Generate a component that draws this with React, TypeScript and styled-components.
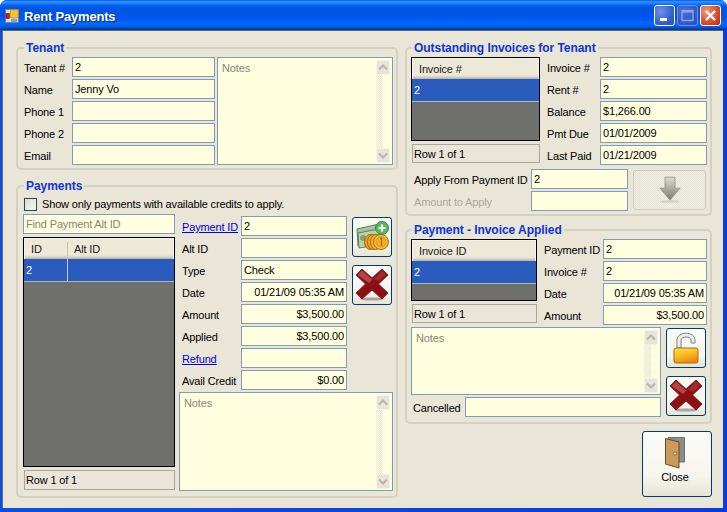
import React from 'react';
import styled, { createGlobalStyle } from 'styled-components';

const Global = createGlobalStyle`
  html, body { margin: 0; padding: 0; background: #fff; }
  * { box-sizing: border-box; }
  body { font-family: "Liberation Sans", Arial, sans-serif; font-size: 11px; letter-spacing: -0.15px; color: #000; }
`;

const Win = styled.div`
  width: 727px; height: 512px; display: flex; flex-direction: column;
  border-radius: 7px 7px 0 0; overflow: hidden;
  background: #0a3be0;
`;
const TitleBar = styled.div`
  height: 30px; flex: none; display: flex; align-items: center; padding: 1px 6px 0 5px;
  background: linear-gradient(to bottom, #0058e6 0, #3a93ff 6%, #127dff 12%, #0262ee 18%, #0057e5 24%, #0054e3 36%, #0055eb 56%, #005bf5 66%, #026afe 76%, #0062ef 86%, #0052d6 92%, #0040ab 96%, #003092 100%);
`;
const TitleText = styled.span`
  margin-left: 5px; padding-top: 2px; color: #fff; font-weight: bold; font-size: 13px; letter-spacing: -0.2px;
  text-shadow: 1px 1px 1px #0a2a90; flex: 1;
`;
const WinBtns = styled.div`display: flex; gap: 2px;`;
const WinBtn = styled.div<{ $kind: 'min' | 'max' | 'close' }>`
  width: 21px; height: 21px; border-radius: 3px; border: 1px solid ${p => p.$kind === 'max' ? '#6f8fe8' : '#fff'};
  display: flex; align-items: center; justify-content: center;
  background: ${p => p.$kind === 'close'
    ? 'radial-gradient(circle at 30% 30%, #f09a7c, #d9492a 60%, #b92f12)'
    : p.$kind === 'max'
      ? 'radial-gradient(circle at 30% 30%, #4a70d8, #2f55c8 70%, #2a4cc0)'
      : 'radial-gradient(circle at 30% 30%, #6f90e4, #3560d0 60%, #2a4dc0)'};
`;
const Frame = styled.div`
  flex: 1; display: flex; padding: 0 4px 4px 3px; min-height: 0;
  background: linear-gradient(to right, #0a50e0, #0a3be0);
`;
const Client = styled.div`
  flex: 1; display: flex; gap: 6px; background: #e9e5d7; padding: 10px 0 0 13px;
  border-top: 1px solid #5c6470; border-left: 1px solid #6a7078; margin-left: -1px;
`;
const Col = styled.div<{ $w: number }>`
  width: ${p => p.$w}px; flex: none; display: flex; flex-direction: column; align-items: flex-start;
`;
const Group = styled.fieldset<{ $h: number; $mt?: number; $pl: number }>`
  margin: ${p => p.$mt ?? 0}px 0 0; width: calc(100% - 1px); height: ${p => p.$h}px; min-width: 0;
  padding: 2px 0 0 ${p => p.$pl}px;
  border: 2px solid #d4d1c1; border-radius: 5px;
`;
const Legend = styled.legend<{ $ml?: number }>`
  margin-left: ${p => p.$ml ?? 1}px; padding: 1px 2px 0; font-weight: bold; font-size: 12px; letter-spacing: -0.05px; line-height: 13px; color: #0c35d8;
`;
const Hbox = styled.div<{ $gap?: number }>`display: flex; gap: ${p => p.$gap ?? 0}px; align-items: flex-start;`;
const Stack = styled.div<{ $w?: number; $gap?: number; $mt?: number }>`
  display: flex; flex-direction: column; gap: ${p => p.$gap ?? 2}px;
  ${p => p.$w ? `width: ${p.$w}px; flex: none;` : ''}
  ${p => p.$mt ? `margin-top: ${p.$mt}px;` : ''}
`;
const Row = styled.div<{ $label: number; $ml?: number }>`
  display: grid; grid-template-columns: ${p => p.$label}px 1fr; align-items: center;
  margin-left: ${p => p.$ml ?? 0}px;
`;
const Label = styled.span<{ $off?: boolean }>`
  padding-top: 2px; white-space: nowrap; color: ${p => p.$off ? '#aca899' : '#000'};
`;
const LinkLabel = styled(Label)`color: #0000e6; text-decoration: underline;`;
const Field = styled.div<{ $right?: boolean; $ph?: boolean }>`
  height: 20px; border: 1px solid #7f9db9; background: #ffffdf; display: flex; align-items: center;
  padding: 0 2px 1px 2px; white-space: nowrap; overflow: hidden;
  justify-content: ${p => p.$right ? 'flex-end' : 'flex-start'};
  color: ${p => p.$ph ? '#85857c' : '#000'};
`;
const Notes = styled.div<{ $w: number; $h: number }>`
  width: ${p => p.$w}px; height: ${p => p.$h}px; flex: none; border: 1px solid #7f9db9; background: #ffffdf;
  display: flex; justify-content: space-between; color: #85857c;
`;
const NotesText = styled.span`padding: 4px 4px;`;
const Scroll = styled.div`
  width: 14px; margin: 2px 2px 1px 0; display: flex; flex-direction: column;
`;
const ScrollTrack = styled.div`
  flex: 1; width: 7px;
  background: repeating-conic-gradient(#e8e5d6 0 25%, #ffffdf 0 50%) 0 0 / 2px 2px;
`;
const ScrollBtn = styled.div`
  height: 15px; flex: none; display: flex; align-items: center; justify-content: center;
  background: #e8e5d8; border: 1px solid #f4f2e8; border-radius: 2px;
`;
const DataGrid = styled.div<{ $h: number }>`
  height: ${p => p.$h}px; border: 1px solid #000; background: #6f706b; display: flex; flex-direction: column;
`;
const Head = styled.div<{ $cols: string }>`
  height: 21px; flex: none; display: grid; grid-template-columns: ${p => p.$cols};
  background: linear-gradient(to bottom, #ece9d8 0, #ece9d8 80%, #d8d4c4 90%, #b4b0a0 100%);
  border: 1px solid #f4f2e8; border-bottom: 0;
`;
const HeadCell = styled.span<{ $sep?: boolean }>`
  display: flex; align-items: center; padding: 0 0 1px 6px; color: #222;
  ${p => p.$sep ? 'border-right: 1px solid #c8c4b4; margin: 3px 0; padding-bottom: 0;' : ''}
`;
const SelRow = styled.div<{ $cols: string }>`
  height: 23px; flex: none; display: grid; grid-template-columns: ${p => p.$cols};
  background: #2a5cbd; color: #fff; border-bottom: 1px solid #b0b4b8;
`;
const SelCell = styled.span<{ $sep?: boolean }>`
  display: flex; align-items: center; padding-left: 2px;
  ${p => p.$sep ? 'border-right: 1px solid #c4ccd8;' : ''}
`;
const RowCount = styled.div<{ $mt: number; $h: number; $ml?: number }>`
  margin: ${p => p.$mt}px 0 0 ${p => p.$ml ?? 1}px; height: ${p => p.$h}px; border: 1px solid #aca899; background: #e9e5d9;
  display: flex; align-items: center; padding-left: 1px;
`;
const IconBtn = styled.div<{ $w?: number; $h?: number; $off?: boolean }>`
  width: ${p => p.$w ?? 40}px; height: ${p => p.$h ?? 40}px; flex: none;
  border: 1px solid ${p => p.$off ? '#d0cec0' : '#003c74'}; border-radius: 3px;
  background: ${p => p.$off ? 'repeating-conic-gradient(#e4e2d6 0 25%, #f2f0e6 0 50%) 0 0 / 2px 2px'
    : 'linear-gradient(to bottom, #fbfbf6, #f6f5ee 70%, #e6e3d6)'};
  display: flex; flex-direction: column; align-items: center; justify-content: center;
`;
const CheckLine = styled.div`display: flex; align-items: center; gap: 5px; margin: 2px 0 3px 1px; height: 14px;`;
const CheckBox = styled.div`
  width: 13px; height: 13px; border: 1px solid #1c4a70;
  background: linear-gradient(135deg, #dcdcd0, #f6f6ee);
`;
const CloseBtn = styled(IconBtn)`margin: 7px 0 0 237px; padding-right: 4px;`;
const CloseLabel = styled.span`line-height: 13px; margin: 2px 0 8px;`;

const Up = () => (
  <svg width="10" height="7" viewBox="0 0 10 7"><path d="M1 5.5 L5 1.5 L9 5.5" fill="none" stroke="#b8b5a6" strokeWidth="2" /></svg>
);
const Down = () => (
  <svg width="10" height="7" viewBox="0 0 10 7"><path d="M1 1.5 L5 5.5 L9 1.5" fill="none" stroke="#b8b5a6" strokeWidth="2" /></svg>
);
const ScrollBar = () => (
  <Scroll><ScrollBtn><Up /></ScrollBtn><ScrollTrack /><ScrollBtn><Down /></ScrollBtn></Scroll>
);
const RedX = () => (
  <svg width="34" height="34" viewBox="0 0 34 34">
    <ellipse cx="17" cy="31" rx="12" ry="1.6" fill="#a8a69c" />
    <path d="M1 7 L7 1 L17 10 L27 1 L33 7 L23.500 16 L33 25 L27 31 L17 22 L7 31 L1 25 L10.500 16 Z" fill="#8c0f16" stroke="#6e0a10" strokeWidth="0.8" />
    <path d="M2.500 7 L7 2.500 L17 11.500 L21 8 L14 15 Z" fill="#b5444a" />
    <path d="M27 2.500 L31 6.500 L24 13 L19 11 Z" fill="#a42a30" />
  </svg>
);
const CashIcon = () => (
  <svg width="34" height="32" viewBox="0 0 34 32">
    <path d="M2 8 L24 3 L24 22 L3 25 Z" fill="#a8c49a" stroke="#5e7f58" strokeWidth="1" />
    <path d="M3 12 L24 8 L24 24 L4 27 Z" fill="#bcd2ae" stroke="#5e7f58" strokeWidth="1" />
    <circle cx="8" cy="17" r="3" fill="#7fa06f" />
    <ellipse cx="15" cy="21" rx="5.500" ry="7.500" fill="#e69a1e" stroke="#a96a10" />
    <ellipse cx="18" cy="21" rx="5.500" ry="7.500" fill="#efa924" stroke="#a96a10" />
    <ellipse cx="21" cy="21" rx="5.500" ry="7.500" fill="#f2b22c" stroke="#a96a10" />
    <circle cx="26" cy="21" r="7.500" fill="#f6bc3a" stroke="#a96a10" />
    <circle cx="26" cy="21" r="5" fill="#f2ae26" stroke="#c98a18" strokeWidth="0.7" />
    <path d="M25 18 L26.500 17 L26.500 25" fill="none" stroke="#a96a10" strokeWidth="1.2" />
    <circle cx="27" cy="7" r="6.500" fill="#5cb85c" stroke="#2f8a3c" />
    <path d="M27 3.500 V10.500 M23.500 7 H30.500" stroke="#fff" strokeWidth="2.2" />
  </svg>
);
const LockIcon = () => (
  <svg width="28" height="34" viewBox="0 0 28 34">
    <defs>
      <linearGradient id="lockGrad" x1="0" y1="0" x2="0.4" y2="1">
        <stop offset="0" stopColor="#ffe050" /><stop offset="0.45" stopColor="#fcc428" /><stop offset="1" stopColor="#f08a10" />
      </linearGradient>
    </defs>
    <path d="M5 17 V9 C5 0 23 0 23 9 V12 H19 V9 C19 5 9 5 9 9 V17 Z" fill="#eceef4" stroke="#7b8090" strokeWidth="1" />
    <rect x="2" y="17" width="24" height="15" rx="2" fill="url(#lockGrad)" stroke="#a86a10" />
  </svg>
);
const DoorIcon = () => (
  <svg width="20" height="32" viewBox="0 0 20 32">
    <path d="M3 0.500 H19.500 V25 H14 Z" fill="#8c8c88" stroke="#5c5c58" strokeWidth="0.8" />
    <path d="M0.500 1.500 L14 5 V31 L0.500 27 Z" fill="#c99a5c" stroke="#6e4a20" strokeWidth="1" />
    <circle cx="10" cy="16.500" r="1.600" fill="#f2d24a" stroke="#6e5a10" strokeWidth="0.6" />
  </svg>
);
const ArrowIcon = () => (
  <svg width="22" height="28" viewBox="0 0 24 30">
    <defs>
      <linearGradient id="arrowGrad" x1="0" y1="0" x2="0" y2="1">
        <stop offset="0" stopColor="#dcdad0" /><stop offset="1" stopColor="#7c7c74" />
      </linearGradient>
    </defs>
    <ellipse cx="12" cy="27.500" rx="11" ry="1.500" fill="#d4d2c6" />
    <path d="M6.500 1 H17.500 V13 H23 L12 26 L1 13 H6.500 Z" fill="url(#arrowGrad)" stroke="#8c8c84" strokeWidth="0.8" />
  </svg>
);
const AppIcon = () => (
  <svg width="14" height="14" viewBox="0 0 16 16">
    <rect x="0.500" y="0.500" width="15" height="15" fill="#e4e0d0" stroke="#7c7c70" />
    <rect x="6" y="1" width="9" height="9" fill="#f4c430" stroke="#b88a10" strokeWidth="0.6" />
    <rect x="1" y="5" width="4" height="6" fill="#c81818" stroke="#6e1010" strokeWidth="0.6" />
    <rect x="7" y="11" width="7" height="4" fill="#80a0d0" />
  </svg>
);

const F = ({ label, v, right, link, w, ml }: { label: string; v?: string; right?: boolean; link?: boolean; w: number; ml?: number }) => (
  <Row $label={w} $ml={ml}>
    {link ? <LinkLabel>{label}</LinkLabel> : <Label>{label}</Label>}
    <Field $right={right}>{v}</Field>
  </Row>
);

export default function App() {
  return (
    <Win>
      <Global />
      <TitleBar>
        <AppIcon />
        <TitleText>Rent Payments</TitleText>
        <WinBtns>
          <WinBtn $kind="min">
            <svg width="13" height="13" viewBox="0 0 13 13"><rect x="2" y="9" width="7" height="3" fill="#fff" /></svg>
          </WinBtn>
          <WinBtn $kind="max">
            <svg width="13" height="13" viewBox="0 0 13 13"><rect x="1" y="1.500" width="11" height="10" fill="none" stroke="#8ea6e8" strokeWidth="1.400" /><rect x="1" y="1" width="11" height="2.500" fill="#8ea6e8" /></svg>
          </WinBtn>
          <WinBtn $kind="close">
            <svg width="13" height="13" viewBox="0 0 13 13"><path d="M2 2 L11 11 M11 2 L2 11" stroke="#fff" strokeWidth="2.400" /></svg>
          </WinBtn>
        </WinBtns>
      </TitleBar>
      <Frame>
        <Client>
          <Col $w={383}>
            <Group $h={129} $pl={6}>
              <Legend $ml={0}>Tenant</Legend>
              <Hbox $gap={2}>
                <Stack $w={191}>
                  <F w={48} label="Tenant #" v="2" />
                  <F w={48} label="Name" v="Jenny Vo" />
                  <F w={48} label="Phone 1" />
                  <F w={48} label="Phone 2" />
                  <F w={48} label="Email" />
                </Stack>
                <Notes $w={176} $h={108}><NotesText>Notes</NotesText><ScrollBar /></Notes>
              </Hbox>
            </Group>
            <Group $h={319} $mt={9} $pl={5}>
              <Legend>Payments</Legend>
              <CheckLine>
                <CheckBox />
                <span>Show only payments with available credits to apply.</span>
              </CheckLine>
              <Hbox $gap={4}>
                <Stack $w={152} $gap={3}>
                  <Field $ph>Find Payment Alt ID</Field>
                  <div>
                    <DataGrid $h={230}>
                      <Head $cols="43px 1fr">
                        <HeadCell $sep>ID</HeadCell>
                        <HeadCell>Alt ID</HeadCell>
                      </Head>
                      <SelRow $cols="44px 1fr">
                        <SelCell $sep>2</SelCell>
                        <SelCell />
                      </SelRow>
                    </DataGrid>
                    <RowCount $mt={3} $h={20}>Row 1 of 1</RowCount>
                  </div>
                </Stack>
                <Stack $w={214} $gap={2} $mt={2}>
                  <Hbox $gap={5}>
                    <Stack $w={168}>
                      <F w={59} ml={3} link label="Payment ID" v="2" />
                      <F w={59} ml={3} label="Alt ID" />
                      <F w={59} ml={3} label="Type" v="Check" />
                      <F w={59} ml={3} label="Date" v="01/21/09 05:35 AM" right />
                      <F w={59} ml={3} label="Amount" v="$3,500.00" right />
                      <F w={59} ml={3} label="Applied" v="$3,500.00" right />
                      <F w={59} ml={3} link label="Refund" />
                      <F w={59} ml={3} label="Avail Credit" v="$0.00" right />
                    </Stack>
                    <Stack $gap={8} $mt={1}>
                      <IconBtn><CashIcon /></IconBtn>
                      <IconBtn><RedX /></IconBtn>
                    </Stack>
                  </Hbox>
                  <Notes $w={214} $h={99}><NotesText>Notes</NotesText><ScrollBar /></Notes>
                </Stack>
              </Hbox>
            </Group>
          </Col>
          <Col $w={308}>
            <Group $h={175} $pl={4}>
              <Legend>Outstanding Invoices for Tenant</Legend>
              <Hbox $gap={7}>
                <Stack $w={129} $gap={0}>
                  <DataGrid $h={84}>
                    <Head $cols="1fr"><HeadCell>Invoice #</HeadCell></Head>
                    <SelRow $cols="1fr"><SelCell>2</SelCell></SelRow>
                  </DataGrid>
                  <RowCount $mt={3} $h={19}>Row 1 of 1</RowCount>
                </Stack>
                <Stack $w={160}>
                  <F w={53} label="Invoice #" v="2" />
                  <F w={53} label="Rent #" v="2" />
                  <F w={53} label="Balance" v="$1,266.00" />
                  <F w={53} label="Pmt Due" v="01/01/2009" />
                  <F w={53} label="Last Paid" v="01/21/2009" />
                </Stack>
              </Hbox>
              <Hbox $gap={5}>
                <Stack $w={217} $gap={2} $mt={4}>
                  <Row $label={117} $ml={3}><Label>Apply From Payment ID</Label><Field>2</Field></Row>
                  <Row $label={117} $ml={3}><Label $off>Amount to Apply</Label><Field /></Row>
                </Stack>
                <Stack $mt={5}><IconBtn $w={73} $off><ArrowIcon /></IconBtn></Stack>
              </Hbox>
            </Group>
            <Group $h={201} $mt={7} $pl={4}>
              <Legend>Payment - Invoice Applied</Legend>
              <Hbox $gap={7}>
                <Stack $w={126} $gap={0}>
                  <DataGrid $h={62}>
                    <Head $cols="1fr"><HeadCell>Invoice ID</HeadCell></Head>
                    <SelRow $cols="1fr"><SelCell>2</SelCell></SelRow>
                  </DataGrid>
                  <RowCount $mt={3} $h={19}>Row 1 of 1</RowCount>
                </Stack>
                <Stack $w={163}>
                  <F w={59} label="Payment ID" v="2" />
                  <F w={59} label="Invoice #" v="2" />
                  <F w={59} label="Date" v="01/21/09 05:35 AM" right />
                  <F w={59} label="Amount" v="$3,500.00" right />
                </Stack>
              </Hbox>
              <Hbox $gap={5}>
                <Stack $w={250} $gap={2} $mt={2}>
                  <Notes $w={250} $h={68}><NotesText>Notes</NotesText><ScrollBar /></Notes>
                  <Row $label={52} $ml={2}><Label>Cancelled</Label><Field /></Row>
                </Stack>
                <Stack $gap={8} $mt={3}>
                  <IconBtn><LockIcon /></IconBtn>
                  <IconBtn><RedX /></IconBtn>
                </Stack>
              </Hbox>
            </Group>
            <CloseBtn $w={70} $h={66}><DoorIcon /><CloseLabel>Close</CloseLabel></CloseBtn>
          </Col>
        </Client>
      </Frame>
    </Win>
  );
}
